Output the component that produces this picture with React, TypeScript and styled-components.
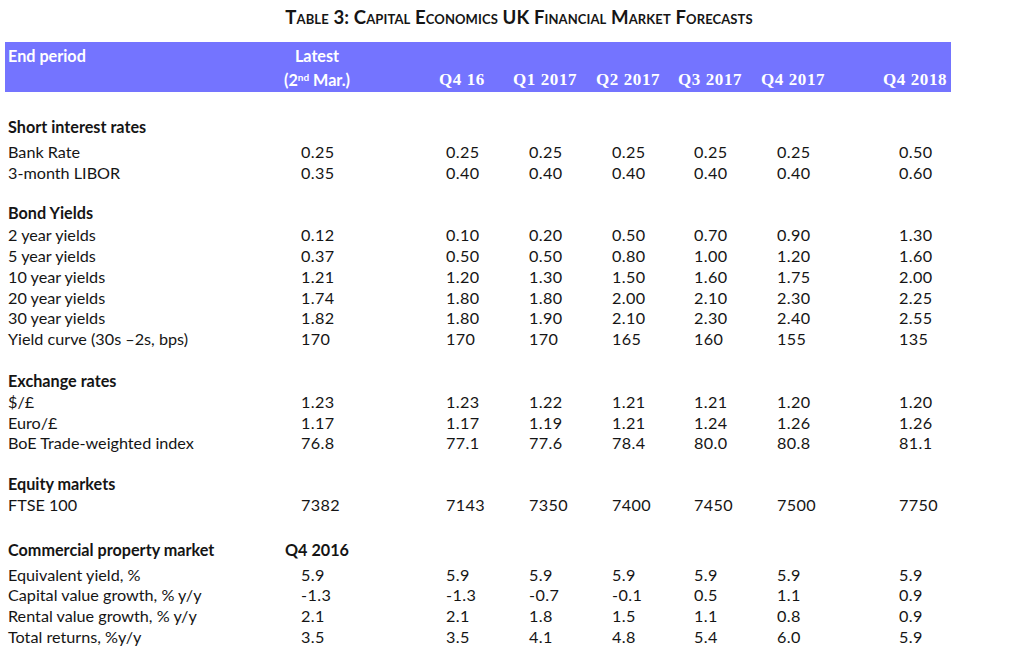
import React from 'react';
import styled, { createGlobalStyle } from 'styled-components';

const GlobalStyle = createGlobalStyle`
  body {
    margin: 0;
    background: #ffffff;
    color: #151515;
    font-family: Lato, "Open Sans", sans-serif;
  }
`;

// 列宽：标签列 + 各数据列（中间夹着空隙列）
const COLUMNS = '272px 80px 63px 84px 82px 84px 80px 86px 44px 70px';
const DATA_COLS = [2, 4, 5, 6, 7, 8, 10];

const Page = styled.div`
  padding: 8px 0 0 5px;
`;

const Title = styled.h1`
  margin: 0 0 16px;
  text-align: center;
  font-family: Lato, sans-serif;
  font-size: 18.6px;
  font-weight: 700;
  font-variant: small-caps;
  letter-spacing: 0.1px;
  line-height: 18px;
`;

const HeaderBar = styled.div`
  width: 946px;
  height: 50px;
  box-sizing: border-box;
  padding-top: 2px;
  background: #7474ff;
  color: #ffffff;
  display: grid;
  grid-template-columns: ${COLUMNS};
  grid-auto-rows: 24px;
  font-weight: 700;
  line-height: 24px;
`;

const HeadCell = styled.div<{ $col: number; $row: number; $serif?: boolean }>`
  grid-column: ${(p) => p.$col};
  grid-row: ${(p) => p.$row};
  text-align: ${(p) => (p.$col === 1 ? 'left' : 'center')};
  padding-left: ${(p) => (p.$col === 1 ? '3px' : '0')};
  white-space: nowrap;
  font-family: ${(p) => (p.$serif ? '"Liberation Serif", serif' : 'Lato, sans-serif')};
  font-size: ${(p) => (p.$serif ? '17px' : '16.2px')};
  letter-spacing: ${(p) => (p.$serif ? '0.6px' : '0')};
`;

const Sup = styled.sup`
  font-size: 10px;
  line-height: 0;
  vertical-align: 5px;
`;

const Body = styled.div`
  padding-top: 25px;
`;

const Section = styled.section<{ $top: number }>`
  margin-top: ${(p) => p.$top}px;
`;

const Row = styled.div<{ $after?: number }>`
  display: grid;
  grid-template-columns: ${COLUMNS};
  height: 20.8px;
  line-height: 20.8px;
  font-size: 16.2px;
  margin-bottom: ${(p) => p.$after ?? 0}px;
`;

const Label = styled.div<{ $bold?: boolean }>`
  grid-column: 1;
  padding-left: 3px;
  white-space: nowrap;
  font-weight: ${(p) => (p.$bold ? 700 : 400)};
`;

const Value = styled.div<{ $col: number }>`
  grid-column: ${(p) => p.$col};
  display: flex;
  justify-content: center;
  span {
    width: 32px;
    text-align: left;
    white-space: nowrap;
    letter-spacing: 0.4px;
  }
`;

const SubHead = styled.div<{ $col: number }>`
  grid-column: ${(p) => p.$col};
  text-align: center;
  font-weight: 700;
`;

type Sec = {
  title: string;
  top: number;
  after: number;
  sub?: string;
  rows: [string, string[]][];
};

const sections: Sec[] = [
  {
    title: 'Short interest rates',
    top: 0,
    after: 4,
    rows: [
      ['Bank Rate', ['0.25', '0.25', '0.25', '0.25', '0.25', '0.25', '0.50']],
      ['3-month LIBOR', ['0.35', '0.40', '0.40', '0.40', '0.40', '0.40', '0.60']],
    ],
  },
  {
    title: 'Bond Yields',
    top: 20,
    after: 1,
    rows: [
      ['2 year yields', ['0.12', '0.10', '0.20', '0.50', '0.70', '0.90', '1.30']],
      ['5 year yields', ['0.37', '0.50', '0.50', '0.80', '1.00', '1.20', '1.60']],
      ['10 year yields', ['1.21', '1.20', '1.30', '1.50', '1.60', '1.75', '2.00']],
      ['20 year yields', ['1.74', '1.80', '1.80', '2.00', '2.10', '2.30', '2.25']],
      ['30 year yields', ['1.82', '1.80', '1.90', '2.10', '2.30', '2.40', '2.55']],
      ['Yield curve (30s –2s, bps)', ['170', '170', '170', '165', '160', '155', '135']],
    ],
  },
  {
    title: 'Exchange rates',
    top: 21,
    after: 0,
    rows: [
      ['$/£', ['1.23', '1.23', '1.22', '1.21', '1.21', '1.20', '1.20']],
      ['Euro/£', ['1.17', '1.17', '1.19', '1.21', '1.24', '1.26', '1.26']],
      ['BoE Trade-weighted index', ['76.8', '77.1', '77.6', '78.4', '80.0', '80.8', '81.1']],
    ],
  },
  {
    title: 'Equity markets',
    top: 20,
    after: 0,
    rows: [['FTSE 100', ['7382', '7143', '7350', '7400', '7450', '7500', '7750']]],
  },
  {
    title: 'Commercial property market',
    top: 24,
    after: 4,
    sub: 'Q4 2016',
    rows: [
      ['Equivalent yield, %', ['5.9', '5.9', '5.9', '5.9', '5.9', '5.9', '5.9']],
      ['Capital value growth, % y/y', ['-1.3', '-1.3', '-0.7', '-0.1', '0.5', '1.1', '0.9']],
      ['Rental value growth, % y/y', ['2.1', '2.1', '1.8', '1.5', '1.1', '0.8', '0.9']],
      ['Total returns, %y/y', ['3.5', '3.5', '4.1', '4.8', '5.4', '6.0', '5.9']],
    ],
  },
];

const periods = ['Q4 16', 'Q1 2017', 'Q2 2017', 'Q3 2017', 'Q4 2017', 'Q4 2018'];

export default function App() {
  return (
    <Page>
      <GlobalStyle />
      <Title>Table 3: Capital Economics UK Financial Market Forecasts</Title>
      <HeaderBar>
        <HeadCell $col={1} $row={1}>End period</HeadCell>
        <HeadCell $col={2} $row={1}>Latest</HeadCell>
        <HeadCell $col={2} $row={2}>
          (2<Sup>nd</Sup> Mar.)
        </HeadCell>
        {periods.map((p, i) => (
          <HeadCell key={p} $col={DATA_COLS[i + 1]} $row={2} $serif>
            {p}
          </HeadCell>
        ))}
      </HeaderBar>
      <Body>
        {sections.map((s) => (
          <Section key={s.title} $top={s.top}>
            <Row $after={s.after}>
              <Label $bold>{s.title}</Label>
              {s.sub && <SubHead $col={2}>{s.sub}</SubHead>}
            </Row>
            {s.rows.map(([name, vals]) => (
              <Row key={name}>
                <Label>{name}</Label>
                {vals.map((v, i) => (
                  <Value key={i} $col={DATA_COLS[i]}>
                    <span>{v}</span>
                  </Value>
                ))}
              </Row>
            ))}
          </Section>
        ))}
      </Body>
    </Page>
  );
}
